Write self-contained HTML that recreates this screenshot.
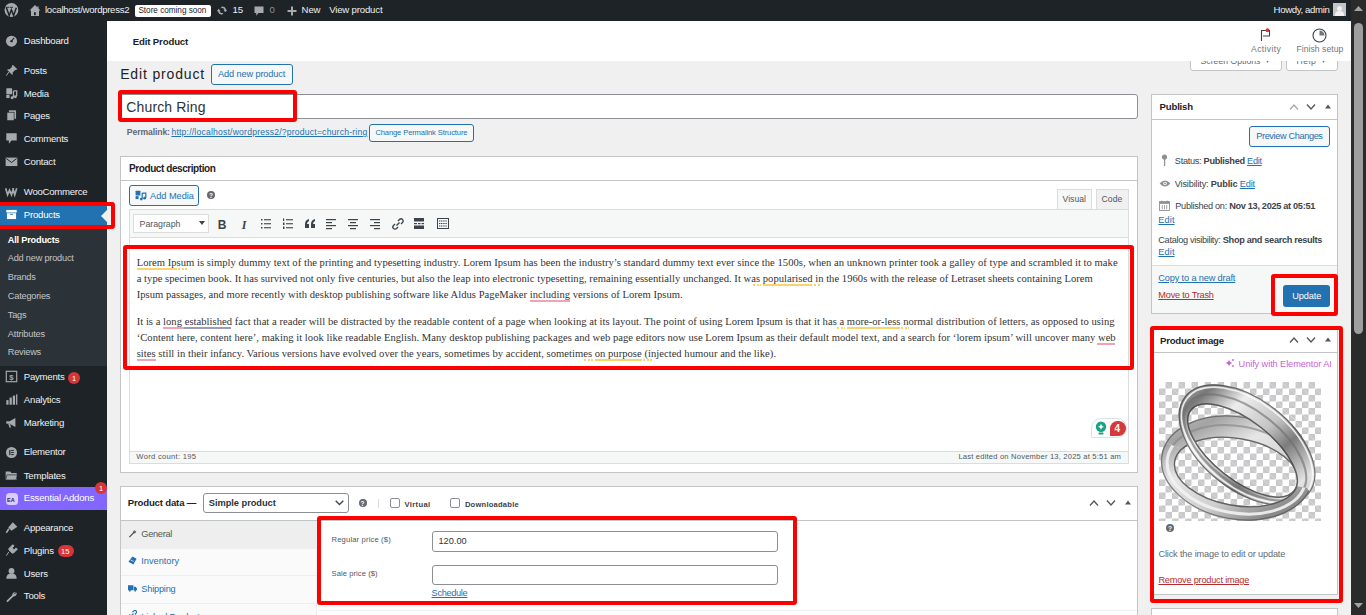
<!DOCTYPE html>
<html><head><meta charset="utf-8"><style>*{box-sizing:border-box;margin:0;padding:0}
html,body{width:1366px;height:615px;overflow:hidden;background:#f0f0f1;font-family:"Liberation Sans",sans-serif;color:#3c434a;position:relative}
.a{position:absolute}
.tx{position:absolute;white-space:nowrap;line-height:1}
.btn{position:absolute;border:1px solid #2271b1;background:#f6f7f7;border-radius:3px}
.red{position:absolute;border:4px solid #f00;border-radius:3px}
b{font-weight:700}
u{text-decoration:underline}
</style></head><body>
<div class="a" style="left:0;top:0;width:1351px;height:21px;background:#1d2327"></div>
<svg class="a" style="left:4px;top:3px" width="15" height="15" viewBox="0 0 15 15"><circle cx="7.4" cy="7" r="6.9" fill="#a7aaad"/><path d="M2.3 4.6 L5.2 12.6 L7.4 6.8 L9.6 12.6 L12.3 4.8" fill="none" stroke="#1d2327" stroke-width="1.5"/><path d="M1.6 4.3 H5.4 M6 4.3 H9" stroke="#1d2327" stroke-width="0.9"/></svg>
<svg class="a" style="left:29px;top:4px" width="12" height="13" viewBox="0 0 12 13"><path d="M6 1 L0.5 6.5 H2 V12 H10 V6.5 H11.5 L9.5 4.5 V2.2 H8.5 V3.5 Z" fill="#a7aaad"/><rect x="5" y="8.2" width="1.8" height="3" fill="#1d2327"/></svg>
<div class="tx" id="t0" style="left:45.00px;top:5.00px;font-size:9.6px;font-weight:400;color:#f0f0f1;font-family:'Liberation Sans',sans-serif;letter-spacing:-0.296px;">localhost/wordpress2</div>
<div class="a" style="left:135px;top:5px;width:76px;height:12px;background:#fff;border-radius:2px"></div>
<div class="tx" id="t1" style="left:138.40px;top:7.00px;font-size:8.2px;font-weight:400;color:#1d2327;font-family:'Liberation Sans',sans-serif;letter-spacing:-0.017px;">Store coming soon</div>
<svg class="a" style="left:216px;top:5px" width="12" height="11" viewBox="0 0 20 20"><path d="M10 2.5 A7.5 7.5 0 0 1 17.3 8.5 L19.5 8.5 L16 13 L12.5 8.5 L14.5 8.5 A4.8 4.8 0 0 0 6 7.5 Z M10 17.5 A7.5 7.5 0 0 1 2.7 11.5 L0.5 11.5 L4 7 L7.5 11.5 L5.5 11.5 A4.8 4.8 0 0 0 14 12.5 Z" fill="#a7aaad"/></svg>
<div class="tx" id="t2" style="left:232.60px;top:5.00px;font-size:9.6px;font-weight:400;color:#f0f0f1;font-family:'Liberation Sans',sans-serif;letter-spacing:-0.186px;">15</div>
<svg class="a" style="left:254px;top:6px" width="10" height="10" viewBox="0 0 20 20"><path d="M1 1 H19 V14 H9 L4.5 19.5 V14 H1 Z" fill="#a7aaad"/></svg>
<div class="tx" id="t3" style="left:269.60px;top:5.00px;font-size:9.6px;font-weight:400;color:#8c8f94;font-family:'Liberation Sans',sans-serif;letter-spacing:0.000px;">0</div>
<svg class="a" style="left:287px;top:6px" width="10" height="10" viewBox="0 0 20 20"><path d="M8 1 H12 V8 H19 V12 H12 V19 H8 V12 H1 V8 H8 Z" fill="#a7aaad"/></svg>
<div class="tx" id="t4" style="left:301.60px;top:5.00px;font-size:9.6px;font-weight:400;color:#f0f0f1;font-family:'Liberation Sans',sans-serif;letter-spacing:-0.134px;">New</div>
<div class="tx" id="t5" style="left:329.20px;top:5.00px;font-size:9.6px;font-weight:400;color:#f0f0f1;font-family:'Liberation Sans',sans-serif;letter-spacing:-0.175px;">View product</div>
<div class="tx" id="t6" style="left:1273.60px;top:5.00px;font-size:9.6px;font-weight:400;color:#f0f0f1;font-family:'Liberation Sans',sans-serif;letter-spacing:-0.357px;">Howdy, admin</div>
<div class="a" style="left:1333px;top:3px;width:13px;height:13px;background:#c3c4c7;overflow:hidden"><div class="a" style="left:4px;top:3px;width:5px;height:5px;border-radius:50%;background:#f0f0f1"></div><div class="a" style="left:2px;top:8px;width:9px;height:7px;border-radius:50% 50% 0 0;background:#f0f0f1"></div></div>
<div class="a" style="left:1351px;top:0;width:15px;height:615px;background:#2b2b2b"></div>
<div class="a" style="left:1354px;top:23px;width:9px;height:311px;background:#9e9e9e;border-radius:4.5px"></div>
<svg class="a" style="left:1354px;top:5px" width="9" height="7"><path d="M0 6 L4.5 1 L9 6 Z" fill="#a3a3a3"/></svg>
<svg class="a" style="left:1354px;top:602px" width="9" height="7"><path d="M0 1 L4.5 6 L9 1 Z" fill="#a3a3a3"/></svg>
<div class="a" style="left:0;top:21px;width:107px;height:594px;background:#1d2327"></div>
<div class="a" style="left:0;top:206px;width:107px;height:19px;background:#2271b1"></div>
<svg class="a" style="left:100px;top:210px" width="7" height="12"><path d="M7 0 L1 6 L7 12 Z" fill="#f0f0f1"/></svg>
<div class="a" style="left:0;top:225px;width:107px;height:141px;background:#2c3338"></div>
<div class="a" style="left:0;top:487px;width:107px;height:23px;background:#8266ff"></div>
<div class="tx" id="t7" style="left:23.80px;top:36.00px;font-size:9.6px;font-weight:400;color:#f0f0f1;font-family:'Liberation Sans',sans-serif;letter-spacing:-0.235px;">Dashboard</div>
<div class="tx" id="t8" style="left:23.80px;top:66.00px;font-size:9.6px;font-weight:400;color:#f0f0f1;font-family:'Liberation Sans',sans-serif;letter-spacing:-0.216px;">Posts</div>
<div class="tx" id="t9" style="left:23.80px;top:89.00px;font-size:9.6px;font-weight:400;color:#f0f0f1;font-family:'Liberation Sans',sans-serif;letter-spacing:-0.235px;">Media</div>
<div class="tx" id="t10" style="left:23.80px;top:111.00px;font-size:9.6px;font-weight:400;color:#f0f0f1;font-family:'Liberation Sans',sans-serif;letter-spacing:-0.245px;">Pages</div>
<div class="tx" id="t11" style="left:23.80px;top:134.00px;font-size:9.6px;font-weight:400;color:#f0f0f1;font-family:'Liberation Sans',sans-serif;letter-spacing:-0.261px;">Comments</div>
<div class="tx" id="t12" style="left:23.80px;top:157.00px;font-size:9.6px;font-weight:400;color:#f0f0f1;font-family:'Liberation Sans',sans-serif;letter-spacing:-0.213px;">Contact</div>
<div class="tx" id="t13" style="left:23.80px;top:187.00px;font-size:9.6px;font-weight:400;color:#f0f0f1;font-family:'Liberation Sans',sans-serif;letter-spacing:-0.272px;">WooCommerce</div>
<div class="tx" id="t14" style="left:23.80px;top:210.00px;font-size:9.6px;font-weight:400;color:#fff;font-family:'Liberation Sans',sans-serif;letter-spacing:-0.213px;">Products</div>
<div class="tx" id="t15" style="left:23.80px;top:372.00px;font-size:9.6px;font-weight:400;color:#f0f0f1;font-family:'Liberation Sans',sans-serif;letter-spacing:-0.240px;">Payments</div>
<div class="tx" id="t16" style="left:23.80px;top:395.00px;font-size:9.6px;font-weight:400;color:#f0f0f1;font-family:'Liberation Sans',sans-serif;letter-spacing:-0.192px;">Analytics</div>
<div class="tx" id="t17" style="left:23.80px;top:418.00px;font-size:9.6px;font-weight:400;color:#f0f0f1;font-family:'Liberation Sans',sans-serif;letter-spacing:-0.211px;">Marketing</div>
<div class="tx" id="t18" style="left:23.80px;top:447.00px;font-size:9.6px;font-weight:400;color:#f0f0f1;font-family:'Liberation Sans',sans-serif;letter-spacing:-0.219px;">Elementor</div>
<div class="tx" id="t19" style="left:23.80px;top:471.00px;font-size:9.6px;font-weight:400;color:#f0f0f1;font-family:'Liberation Sans',sans-serif;letter-spacing:-0.219px;">Templates</div>
<div class="tx" id="t20" style="left:23.80px;top:493.00px;font-size:9.6px;font-weight:400;color:#fff;font-family:'Liberation Sans',sans-serif;letter-spacing:-0.207px;">Essential Addons</div>
<div class="tx" id="t21" style="left:23.80px;top:523.00px;font-size:9.6px;font-weight:400;color:#f0f0f1;font-family:'Liberation Sans',sans-serif;letter-spacing:-0.233px;">Appearance</div>
<div class="tx" id="t22" style="left:23.80px;top:546.00px;font-size:9.6px;font-weight:400;color:#f0f0f1;font-family:'Liberation Sans',sans-serif;letter-spacing:-0.202px;">Plugins</div>
<div class="tx" id="t23" style="left:23.80px;top:569.00px;font-size:9.6px;font-weight:400;color:#f0f0f1;font-family:'Liberation Sans',sans-serif;letter-spacing:-0.226px;">Users</div>
<div class="tx" id="t24" style="left:23.80px;top:591.00px;font-size:9.6px;font-weight:400;color:#f0f0f1;font-family:'Liberation Sans',sans-serif;letter-spacing:-0.202px;">Tools</div>
<div class="tx" id="t25" style="left:7.80px;top:236.00px;font-size:9.2px;font-weight:700;color:#fff;font-family:'Liberation Sans',sans-serif;letter-spacing:-0.203px;">All Products</div>
<div class="tx" id="t26" style="left:7.80px;top:254.00px;font-size:9.2px;font-weight:400;color:#c3c4c7;font-family:'Liberation Sans',sans-serif;letter-spacing:-0.207px;">Add new product</div>
<div class="tx" id="t27" style="left:7.80px;top:273.00px;font-size:9.2px;font-weight:400;color:#c3c4c7;font-family:'Liberation Sans',sans-serif;letter-spacing:-0.218px;">Brands</div>
<div class="tx" id="t28" style="left:7.80px;top:292.00px;font-size:9.2px;font-weight:400;color:#c3c4c7;font-family:'Liberation Sans',sans-serif;letter-spacing:-0.200px;">Categories</div>
<div class="tx" id="t29" style="left:7.80px;top:311.00px;font-size:9.2px;font-weight:400;color:#c3c4c7;font-family:'Liberation Sans',sans-serif;letter-spacing:-0.218px;">Tags</div>
<div class="tx" id="t30" style="left:7.80px;top:330.00px;font-size:9.2px;font-weight:400;color:#c3c4c7;font-family:'Liberation Sans',sans-serif;letter-spacing:-0.175px;">Attributes</div>
<div class="tx" id="t31" style="left:7.80px;top:348.00px;font-size:9.2px;font-weight:400;color:#c3c4c7;font-family:'Liberation Sans',sans-serif;letter-spacing:-0.223px;">Reviews</div>
<div class="a" style="left:68px;top:372px;width:12px;height:12px;border-radius:6px;background:#d63638"></div>
<div class="tx" id="t32" style="left:72.10px;top:375.00px;font-size:7.5px;font-weight:400;color:#fff;font-family:'Liberation Sans',sans-serif;letter-spacing:0.000px;">1</div>
<div class="a" style="left:95px;top:482px;width:12px;height:12px;border-radius:6px;background:#d63638"></div>
<div class="tx" id="t33" style="left:99.10px;top:485.00px;font-size:7.5px;font-weight:400;color:#fff;font-family:'Liberation Sans',sans-serif;letter-spacing:0.000px;">1</div>
<div class="a" style="left:58px;top:545px;width:16px;height:12px;border-radius:6px;background:#d63638"></div>
<div class="tx" id="t34" style="left:61.10px;top:548.00px;font-size:7.5px;font-weight:400;color:#fff;font-family:'Liberation Sans',sans-serif;letter-spacing:0.000px;">15</div>
<svg class="a" style="left:5px;top:33.5px" width="13" height="13" viewBox="0 0 20 20"><circle cx="10" cy="11" r="8.5" fill="#a7aaad"/><path d="M10 11 L14 6" stroke="#1d2327" stroke-width="1.6"/><circle cx="10" cy="11" r="1.8" fill="#1d2327"/></svg>
<svg class="a" style="left:5px;top:63.5px" width="13" height="13" viewBox="0 0 20 20"><path d="M12 2 L18 8 L15 9 L11 13 L11 16 L4 9 L7 9 L11 5 Z M6 12 L2 18" fill="#a7aaad" stroke="#a7aaad" stroke-width="1.5"/></svg>
<svg class="a" style="left:5px;top:86.5px" width="13" height="13" viewBox="0 0 20 20"><rect x="2" y="2" width="9" height="9" rx="1" fill="#a7aaad"/><path d="M13 6 V16 M13 6 H18 V14" stroke="#a7aaad" stroke-width="2" fill="none"/><circle cx="11" cy="16.5" r="2.3" fill="#a7aaad"/><circle cx="16" cy="15" r="2.3" fill="#a7aaad"/><rect x="2" y="12" width="5" height="5" fill="#a7aaad"/></svg>
<svg class="a" style="left:5px;top:108.5px" width="13" height="13" viewBox="0 0 20 20"><rect x="6" y="2" width="11" height="13" fill="#a7aaad"/><rect x="3" y="5" width="11" height="13" fill="#a7aaad" stroke="#1d2327" stroke-width="1"/></svg>
<svg class="a" style="left:5px;top:131.5px" width="13" height="13" viewBox="0 0 20 20"><path d="M2 2 H18 V13 H10 L6 18 V13 H2 Z" fill="#a7aaad"/></svg>
<svg class="a" style="left:5px;top:154.5px" width="13" height="13" viewBox="0 0 20 20"><rect x="1" y="4" width="18" height="13" fill="#a7aaad"/><path d="M2 5.5 L10 11.5 L18 5.5" stroke="#1d2327" stroke-width="1.5" fill="none"/></svg>
<svg class="a" style="left:5px;top:184.5px" width="13" height="13" viewBox="0 0 20 20"><path d="M1 5 L4 15 L7 8 L10 15 L13 5 M12 5 L15 15 L18 5" stroke="#a7aaad" stroke-width="2.6" fill="none"/></svg>
<svg class="a" style="left:5px;top:207.5px" width="13" height="13" viewBox="0 0 20 20"><rect x="2" y="3" width="16" height="4" fill="#fff"/><rect x="3" y="8" width="14" height="9" fill="#fff"/><rect x="8" y="9" width="4" height="1.5" fill="#2271b1"/></svg>
<svg class="a" style="left:5px;top:369.5px" width="13" height="13" viewBox="0 0 20 20"><rect x="2" y="2" width="16" height="16" fill="none" stroke="#a7aaad" stroke-width="1.8"/><text x="10" y="15" font-size="12" font-family="Liberation Sans" text-anchor="middle" fill="#a7aaad" font-weight="bold">$</text></svg>
<svg class="a" style="left:5px;top:392.5px" width="13" height="13" viewBox="0 0 20 20"><rect x="2" y="11" width="3.5" height="7" fill="#a7aaad"/><rect x="7" y="7" width="3.5" height="11" fill="#a7aaad"/><rect x="12" y="4" width="3.5" height="14" fill="#a7aaad"/><rect x="17" y="2" width="2" height="16" fill="#a7aaad"/></svg>
<svg class="a" style="left:5px;top:415.5px" width="13" height="13" viewBox="0 0 20 20"><path d="M2 8 H7 L16 3 V17 L7 12 H2 Z" fill="#a7aaad"/><path d="M5 12 L7 18 H9 L8 12" fill="#a7aaad"/></svg>
<svg class="a" style="left:5px;top:445.5px" width="13" height="13" viewBox="0 0 20 20"><circle cx="10" cy="10" r="8.5" fill="#a7aaad"/><rect x="6.5" y="6" width="1.8" height="8" fill="#1d2327"/><rect x="9.5" y="6" width="4" height="1.5" fill="#1d2327"/><rect x="9.5" y="9.2" width="4" height="1.5" fill="#1d2327"/><rect x="9.5" y="12.5" width="4" height="1.5" fill="#1d2327"/></svg>
<svg class="a" style="left:5px;top:468.5px" width="13" height="13" viewBox="0 0 20 20"><path d="M1 4 H8 L10 6 H18 V17 H1 Z" fill="#a7aaad"/><path d="M3 9 H19 L17 17 H1 Z" fill="#a7aaad" stroke="#1d2327" stroke-width="1"/></svg>
<svg class="a" style="left:5px;top:520.5px" width="13" height="13" viewBox="0 0 20 20"><path d="M12 2 L19 9 L10 15 L5 10 Z" fill="#a7aaad"/><path d="M6 12 L2 18" stroke="#a7aaad" stroke-width="2.5"/></svg>
<svg class="a" style="left:5px;top:543.5px" width="13" height="13" viewBox="0 0 20 20"><path d="M12 1 L14 3 L11 6 L14 9 L17 6 L19 8 L13 14 L11 14 L6 9 L6 7 Z M6 12 L2 18" fill="#a7aaad" stroke="#a7aaad" stroke-width="1.5"/></svg>
<svg class="a" style="left:5px;top:566.5px" width="13" height="13" viewBox="0 0 20 20"><circle cx="10" cy="6" r="4.5" fill="#a7aaad"/><path d="M2 18 Q2 10 10 10 Q18 10 18 18 Z" fill="#a7aaad"/></svg>
<svg class="a" style="left:5px;top:589.5px" width="13" height="13" viewBox="0 0 20 20"><path d="M17 3 A5 5 0 0 0 11 8 L2 17 L4 19 L13 10 A5 5 0 0 0 18 4 L15 6 L14 5 Z" fill="#a7aaad"/></svg>
<div class="a" style="left:6px;top:493px;width:12px;height:12px;border-radius:3.5px;background:#dccbff"></div>
<div class="tx" id="t35" style="left:7.10px;top:498.00px;font-size:5.5px;font-weight:700;color:#2c2150;font-family:'Liberation Sans',sans-serif;letter-spacing:0.000px;">EA</div>
<div class="red" style="left:-4px;top:202px;width:119px;height:27px"></div>
<div class="a" style="left:1190px;top:50px;width:92px;height:21px;background:#fff;border:1px solid #c3c4c7;border-radius:0 0 3px 3px"></div>
<div class="a" style="left:1286px;top:50px;width:52px;height:21px;background:#fff;border:1px solid #c3c4c7;border-radius:0 0 3px 3px"></div>
<div class="tx" id="t36" style="left:1200.60px;top:57.00px;font-size:8.6px;font-weight:400;color:#646970;font-family:'Liberation Sans',sans-serif;letter-spacing:0.040px;">Screen Options</div>
<div class="tx" id="t37" style="left:1265.60px;top:58.00px;font-size:6px;font-weight:400;color:#646970;font-family:'Liberation Sans',sans-serif;letter-spacing:0.000px;">▾</div>
<div class="tx" id="t38" style="left:1296.60px;top:57.00px;font-size:8.6px;font-weight:400;color:#646970;font-family:'Liberation Sans',sans-serif;letter-spacing:0.528px;">Help</div>
<div class="tx" id="t39" style="left:1321.60px;top:58.00px;font-size:6px;font-weight:400;color:#646970;font-family:'Liberation Sans',sans-serif;letter-spacing:0.000px;">▾</div>
<div class="a" style="left:107px;top:21px;width:1244px;height:40px;background:#fff"></div>
<div class="tx" id="t40" style="left:132.80px;top:37.00px;font-size:9.6px;font-weight:700;color:#1d2327;font-family:'Liberation Sans',sans-serif;letter-spacing:-0.144px;">Edit Product</div>
<svg class="a" style="left:1260px;top:28px" width="12" height="14" viewBox="0 0 12 14"><path d="M1.5 13 V2.5 H9.5 V8 H3" fill="none" stroke="#3c434a" stroke-width="1.1"/><circle cx="7.5" cy="2.3" r="2" fill="#d63638"/></svg>
<div class="tx" id="t41" style="left:1251.10px;top:45.00px;font-size:8.6px;font-weight:400;color:#757575;font-family:'Liberation Sans',sans-serif;letter-spacing:0.360px;">Activity</div>
<svg class="a" style="left:1312px;top:28px" width="15" height="15" viewBox="0 0 15 15"><circle cx="7.5" cy="7.5" r="6.5" fill="none" stroke="#3c434a" stroke-width="1.1"/><path d="M7.5 2.5 A5 5 0 0 1 12.5 7.5 H7.5 Z" fill="#757575"/></svg>
<div class="tx" id="t42" style="left:1296.40px;top:45.00px;font-size:8.6px;font-weight:400;color:#757575;font-family:'Liberation Sans',sans-serif;letter-spacing:0.055px;">Finish setup</div>
<div class="tx" id="t43" style="left:120.20px;top:67.00px;font-size:14px;font-weight:400;color:#1d2327;font-family:'Liberation Sans',sans-serif;letter-spacing:0.840px;">Edit product</div>
<div class="btn" style="left:211px;top:64px;width:82px;height:21px"></div>
<div class="tx" id="t44" style="left:218.10px;top:70.00px;font-size:9.2px;font-weight:400;color:#2271b1;font-family:'Liberation Sans',sans-serif;letter-spacing:-0.124px;">Add new product</div>
<div class="a" style="left:120px;top:94px;width:1018px;height:25px;background:#fff;border:1px solid #8c8f94;border-radius:3px"></div>
<div class="tx" id="t45" style="left:126.30px;top:100.00px;font-size:14px;font-weight:400;color:#2c3338;font-family:'Liberation Sans',sans-serif;letter-spacing:0.143px;">Church Ring</div>
<div class="red" style="left:118px;top:90px;width:179px;height:32px"></div>
<div class="tx" id="t46" style="left:126.80px;top:128.00px;font-size:8.6px;font-weight:700;color:#646970;font-family:'Liberation Sans',sans-serif;letter-spacing:-0.085px;">Permalink:</div>
<div class="tx" id="t47" style="left:171.40px;top:128.00px;font-size:8.6px;font-weight:400;color:#2271b1;font-family:'Liberation Sans',sans-serif;letter-spacing:0.207px;text-decoration:underline">http://localhost/wordpress2/?product=church-ring</div>
<div class="btn" style="left:369px;top:124px;width:105px;height:18px"></div>
<div class="tx" id="t48" style="left:375.40px;top:129.00px;font-size:7.6px;font-weight:400;color:#2271b1;font-family:'Liberation Sans',sans-serif;letter-spacing:-0.130px;">Change Permalink Structure</div>
<div class="a" style="left:120px;top:156px;width:1018px;height:317px;background:#fff;border:1px solid #c3c4c7"></div>
<div class="a" style="left:121px;top:180px;width:1016px;height:1px;background:#c3c4c7"></div>
<div class="tx" id="t49" style="left:129.10px;top:164.00px;font-size:10px;font-weight:700;color:#1d2327;font-family:'Liberation Sans',sans-serif;letter-spacing:-0.429px;">Product description</div>
<div class="btn" style="left:129px;top:185px;width:70px;height:21px"></div>
<svg class="a" style="left:135px;top:190px" width="12" height="11" viewBox="0 0 20 18"><rect x="1" y="1" width="8" height="8" rx="1" fill="#2271b1"/><rect x="1" y="10" width="5" height="5" fill="#2271b1"/><path d="M12 5 V14 M12 5 H18 V13" stroke="#2271b1" stroke-width="2" fill="none"/><circle cx="10.5" cy="15" r="2.3" fill="#2271b1"/><circle cx="16" cy="13.5" r="2.3" fill="#2271b1"/></svg>
<div class="tx" id="t50" style="left:150.10px;top:192.00px;font-size:9.2px;font-weight:400;color:#2271b1;font-family:'Liberation Sans',sans-serif;letter-spacing:-0.015px;">Add Media</div>
<div class="a" style="left:207px;top:191px;width:8px;height:8px;border-radius:50%;background:#646970"></div>
<div class="tx" id="t51" style="left:208.90px;top:193.00px;font-size:6.5px;font-weight:700;color:#fff;font-family:'Liberation Sans',sans-serif;letter-spacing:0.000px;">?</div>
<div class="a" style="left:1057px;top:189px;width:35px;height:21px;background:#f6f7f7;border:1px solid #dcdcde;border-bottom:none"></div>
<div class="a" style="left:1096px;top:189px;width:33px;height:21px;background:#f0f0f1;border:1px solid #dcdcde;border-bottom:none"></div>
<div class="tx" id="t52" style="left:1062.60px;top:195.00px;font-size:8.6px;font-weight:400;color:#50575e;font-family:'Liberation Sans',sans-serif;letter-spacing:0.006px;">Visual</div>
<div class="tx" id="t53" style="left:1101.60px;top:195.00px;font-size:8.6px;font-weight:400;color:#50575e;font-family:'Liberation Sans',sans-serif;letter-spacing:0.063px;">Code</div>
<div class="a" style="left:129px;top:209px;width:1000px;height:255px;border:1px solid #dcdcde;background:#fff"></div>
<div class="a" style="left:130px;top:210px;width:998px;height:28px;background:#f6f7f7;border-bottom:1px solid #dcdcde"></div>
<div class="a" style="left:133px;top:214px;width:76px;height:19px;background:#fff;border:1px solid #dcdcde"></div>
<div class="tx" id="t54" style="left:139.60px;top:220.00px;font-size:8.8px;font-weight:400;color:#50575e;font-family:'Liberation Sans',sans-serif;letter-spacing:-0.033px;">Paragraph</div>
<svg class="a" style="left:199px;top:221px" width="6" height="4"><path d="M0 0 H6 L3 4 Z" fill="#3c434a"/></svg>
<svg class="a" style="left:217px;top:218px" width="12" height="12"><text x="5" y="10.5" font-size="12" font-weight="bold" font-family="Liberation Sans" text-anchor="middle" fill="#3c434a">B</text></svg>
<svg class="a" style="left:238.5px;top:218px" width="12" height="12"><text x="5" y="10.5" font-size="12" font-style="italic" font-weight="bold" font-family="Liberation Serif" text-anchor="middle" fill="#3c434a">I</text></svg>
<svg class="a" style="left:261px;top:218px" width="12" height="12"><rect x="0" y="1" width="1.5" height="1.5" fill="#3c434a"/><rect x="3" y="1.2" width="7" height="1.1" fill="#3c434a"/><rect x="0" y="5" width="1.5" height="1.5" fill="#3c434a"/><rect x="3" y="5.2" width="7" height="1.1" fill="#3c434a"/><rect x="0" y="9" width="1.5" height="1.5" fill="#3c434a"/><rect x="3" y="9.2" width="7" height="1.1" fill="#3c434a"/></svg>
<svg class="a" style="left:283px;top:218px" width="12" height="12"><rect x="0" y="0.5" width="1.2" height="2.5" fill="#3c434a"/><rect x="3" y="1.2" width="7" height="1.1" fill="#3c434a"/><rect x="0" y="4.5" width="1.5" height="2.5" fill="#3c434a"/><rect x="3" y="5.2" width="7" height="1.1" fill="#3c434a"/><rect x="0" y="8.5" width="1.5" height="2.5" fill="#3c434a"/><rect x="3" y="9.2" width="7" height="1.1" fill="#3c434a"/></svg>
<svg class="a" style="left:305px;top:218px" width="12" height="12"><path d="M0 10 V6 Q0 2 4 1 V3 Q2 4 2 6 H4 V10 Z M6 10 V6 Q6 2 10 1 V3 Q8 4 8 6 H10 V10 Z" fill="#3c434a"/></svg>
<svg class="a" style="left:326px;top:218px" width="12" height="12"><rect x="0" y="1" width="10" height="1.2" fill="#3c434a"/><rect x="0" y="4" width="6" height="1.2" fill="#3c434a"/><rect x="0" y="7" width="10" height="1.2" fill="#3c434a"/><rect x="0" y="10" width="6" height="1.2" fill="#3c434a"/></svg>
<svg class="a" style="left:348px;top:218px" width="12" height="12"><rect x="0" y="1" width="10" height="1.2" fill="#3c434a"/><rect x="2" y="4" width="6" height="1.2" fill="#3c434a"/><rect x="0" y="7" width="10" height="1.2" fill="#3c434a"/><rect x="2" y="10" width="6" height="1.2" fill="#3c434a"/></svg>
<svg class="a" style="left:370px;top:218px" width="12" height="12"><rect x="0" y="1" width="10" height="1.2" fill="#3c434a"/><rect x="4" y="4" width="6" height="1.2" fill="#3c434a"/><rect x="0" y="7" width="10" height="1.2" fill="#3c434a"/><rect x="4" y="10" width="6" height="1.2" fill="#3c434a"/></svg>
<svg class="a" style="left:392px;top:218px" width="12" height="12"><path d="M4.5 7.5 L7.5 4.5 M3 6 L1.5 7.5 A2 2 0 0 0 4.5 10.5 L6 9 M6 3 L7.5 1.5 A2 2 0 0 1 10.5 4.5 L9 6" stroke="#3c434a" stroke-width="1.4" fill="none"/></svg>
<svg class="a" style="left:414px;top:218px" width="12" height="12"><rect x="0" y="0" width="10" height="3.5" fill="#3c434a"/><rect x="0" y="5" width="3" height="1.2" fill="#3c434a"/><rect x="4" y="5" width="2.5" height="1.2" fill="#3c434a"/><rect x="7.5" y="5" width="2.5" height="1.2" fill="#3c434a"/><rect x="0" y="7.5" width="10" height="3.5" fill="#3c434a"/></svg>
<svg class="a" style="left:436.5px;top:218px" width="12" height="12"><rect x="0.5" y="0.5" width="11" height="10" fill="none" stroke="#3c434a" stroke-width="1"/><path d="M2 3 H10 M2 5.5 H10 M2 8 H10" stroke="#3c434a" stroke-width="1.2" stroke-dasharray="1.2 0.6"/></svg>
<div class="tx" id="t55" style="left:136.70px;top:258.00px;font-size:10.6px;font-weight:400;color:#333;font-family:'Liberation Serif',serif;letter-spacing:0.027px;">Lorem Ipsum is simply dummy text of the printing and typesetting industry. Lorem Ipsum has been the industry’s standard dummy text ever since the 1500s, when an unknown printer took a galley of type and scrambled it to make</div>
<div class="tx" id="t56" style="left:136.70px;top:274.00px;font-size:10.6px;font-weight:400;color:#333;font-family:'Liberation Serif',serif;letter-spacing:0.026px;">a type specimen book. It has survived not only five centuries, but also the leap into electronic typesetting, remaining essentially unchanged. It was popularised in the 1960s with the release of Letraset sheets containing Lorem</div>
<div class="tx" id="t57" style="left:136.70px;top:290.00px;font-size:10.6px;font-weight:400;color:#333;font-family:'Liberation Serif',serif;letter-spacing:0.024px;">Ipsum passages, and more recently with desktop publishing software like Aldus PageMaker including versions of Lorem Ipsum.</div>
<div class="tx" id="t58" style="left:136.70px;top:317.00px;font-size:10.6px;font-weight:400;color:#333;font-family:'Liberation Serif',serif;letter-spacing:0.025px;">It is a long established fact that a reader will be distracted by the readable content of a page when looking at its layout. The point of using Lorem Ipsum is that it has a more-or-less normal distribution of letters, as opposed to using</div>
<div class="tx" id="t59" style="left:136.70px;top:333.00px;font-size:10.6px;font-weight:400;color:#333;font-family:'Liberation Serif',serif;letter-spacing:0.027px;">‘Content here, content here’, making it look like readable English. Many desktop publishing packages and web page editors now use Lorem Ipsum as their default model text, and a search for ‘lorem ipsum’ will uncover many web</div>
<div class="tx" id="t60" style="left:136.70px;top:349.00px;font-size:10.6px;font-weight:400;color:#333;font-family:'Liberation Serif',serif;letter-spacing:0.024px;">sites still in their infancy. Various versions have evolved over the years, sometimes by accident, sometimes on purpose (injected humour and the like).</div>
<div class="a" style="left:137px;top:267.9px;width:40.0px;height:2px;background:#fbd36b"></div>
<div class="a" style="left:178px;top:267.9px;width:9.0px;height:2px;background:repeating-linear-gradient(90deg,#fbd36b 0 2px,transparent 2px 3.6px)"></div>
<div class="a" style="left:753px;top:284.1px;width:8.0px;height:2px;background:repeating-linear-gradient(90deg,#fbd36b 0 2px,transparent 2px 3.6px)"></div>
<div class="a" style="left:763px;top:284.1px;width:49.0px;height:2px;background:#fbd36b"></div>
<div class="a" style="left:813.6px;top:284.1px;width:7.8px;height:2px;background:repeating-linear-gradient(90deg,#fbd36b 0 2px,transparent 2px 3.6px)"></div>
<div class="a" style="left:530px;top:300.1px;width:40.0px;height:2px;background:#f0a3b4"></div>
<div class="a" style="left:163.4px;top:327.4px;width:20.9px;height:2px;background:#f0a3b4"></div>
<div class="a" style="left:184.3px;top:327.4px;width:47.0px;height:2px;background:#9b9bc0"></div>
<div class="a" style="left:837px;top:327.4px;width:8.0px;height:2px;background:repeating-linear-gradient(90deg,#fbd36b 0 2px,transparent 2px 3.6px)"></div>
<div class="a" style="left:847px;top:327.4px;width:52.5px;height:2px;background:#fbd36b"></div>
<div class="a" style="left:901.4px;top:327.4px;width:7.8px;height:2px;background:repeating-linear-gradient(90deg,#fbd36b 0 2px,transparent 2px 3.6px)"></div>
<div class="a" style="left:1097.3px;top:343.2px;width:17.5px;height:2px;background:#f0a3b4"></div>
<div class="a" style="left:137px;top:359.4px;width:18.5px;height:2px;background:#f0a3b4"></div>
<div class="a" style="left:584px;top:359.4px;width:9.0px;height:2px;background:repeating-linear-gradient(90deg,#fbd36b 0 2px,transparent 2px 3.6px)"></div>
<div class="a" style="left:595.4px;top:359.4px;width:46.2px;height:2px;background:#fbd36b"></div>
<div class="a" style="left:642.5px;top:359.4px;width:9.2px;height:2px;background:repeating-linear-gradient(90deg,#fbd36b 0 2px,transparent 2px 3.6px)"></div>
<div class="a" style="left:1091px;top:418px;width:36px;height:20px;background:#fff;border:1px solid #dde0ea;border-radius:10px 10px 10px 0"></div>
<svg class="a" style="left:1095px;top:421px" width="12" height="14" viewBox="0 0 12 14"><circle cx="6" cy="5.8" r="5.2" fill="#1aa383"/><path d="M6 2.8 Q6.4 5.4 9 5.8 Q6.4 6.2 6 8.8 Q5.6 6.2 3 5.8 Q5.6 5.4 6 2.8 Z" fill="#fff"/><rect x="3.5" y="11.6" width="5" height="1.8" rx="0.6" fill="#1aa383"/></svg>
<div class="a" style="left:1110px;top:421px;width:16px;height:15px;border-radius:8px 8px 8px 0;background:#d6393a"></div>
<div class="tx" id="t61" style="left:1114.40px;top:424.00px;font-size:10px;font-weight:700;color:#fff;font-family:'Liberation Sans',sans-serif;letter-spacing:0.000px;">4</div>
<div class="a" style="left:130px;top:451px;width:998px;height:12px;background:#f6f7f7;border-top:1px solid #dcdcde"></div>
<div class="tx" id="t62" style="left:136.30px;top:453.00px;font-size:7.6px;font-weight:400;color:#50575e;font-family:'Liberation Sans',sans-serif;letter-spacing:0.300px;">Word count: 195</div>
<div class="tx" id="t63" style="left:958.40px;top:453.00px;font-size:7.6px;font-weight:400;color:#50575e;font-family:'Liberation Sans',sans-serif;letter-spacing:0.190px;">Last edited on November 13, 2025 at 5:51 am</div>
<div class="red" style="left:123px;top:245px;width:1011px;height:125px"></div>
<div class="a" style="left:120px;top:486px;width:1018px;height:140px;background:#fff;border:1px solid #c3c4c7"></div>
<div class="a" style="left:121px;top:520px;width:1016px;height:1px;background:#c3c4c7"></div>
<div class="tx" id="t64" style="left:127.80px;top:498.00px;font-size:9.6px;font-weight:700;color:#1d2327;font-family:'Liberation Sans',sans-serif;letter-spacing:-0.179px;">Product data —</div>
<div class="a" style="left:203px;top:493px;width:146px;height:20px;background:#fff;border:1px solid #8c8f94;border-radius:3px"></div>
<div class="tx" id="t65" style="left:208.80px;top:499.00px;font-size:9.3px;font-weight:700;color:#2c3338;font-family:'Liberation Sans',sans-serif;letter-spacing:-0.048px;">Simple product</div>
<svg class="a" style="left:335px;top:500px" width="9" height="6"><path d="M0.7 0.7 L4.5 4.5 L8.3 0.7" stroke="#3c434a" stroke-width="1.3" fill="none"/></svg>
<div class="a" style="left:358.5px;top:499px;width:8px;height:8px;border-radius:50%;background:#646970"></div>
<div class="tx" id="t66" style="left:360.40px;top:501.00px;font-size:6.5px;font-weight:700;color:#fff;font-family:'Liberation Sans',sans-serif;letter-spacing:0.000px;">?</div>
<div class="a" style="left:378px;top:499px;width:1px;height:9px;background:#dcdcde"></div>
<div class="a" style="left:390px;top:498px;width:10px;height:10px;border:1px solid #8c8f94;border-radius:2px;background:#fff"></div>
<div class="tx" id="t67" style="left:404.40px;top:501.00px;font-size:7.6px;font-weight:700;color:#3c434a;font-family:'Liberation Sans',sans-serif;letter-spacing:0.386px;">Virtual</div>
<div class="a" style="left:450px;top:498px;width:10px;height:10px;border:1px solid #8c8f94;border-radius:2px;background:#fff"></div>
<div class="tx" id="t68" style="left:464.90px;top:501.00px;font-size:7.6px;font-weight:700;color:#3c434a;font-family:'Liberation Sans',sans-serif;letter-spacing:0.210px;">Downloadable</div>
<svg class="a" style="left:1088.5px;top:499px" width="10" height="8"><path d="M1 6.5 L5 2 L9 6.5" stroke="#50575e" stroke-width="1.3" fill="none"/></svg>
<svg class="a" style="left:1105.5px;top:499px" width="10" height="8"><path d="M1 1.5 L5 6 L9 1.5" stroke="#50575e" stroke-width="1.3" fill="none"/></svg>
<svg class="a" style="left:1125px;top:500px" width="6" height="5"><path d="M0 4.5 L3 0.5 L6 4.5 Z" fill="#50575e"/></svg>
<div class="a" style="left:121px;top:521px;width:196px;height:94px;background:#fafafa;border-right:1px solid #eee"></div>
<div class="a" style="left:121px;top:521px;width:196px;height:28px;background:#eee"></div>
<div class="a" style="left:121px;top:575px;width:196px;height:1px;background:#eee"></div>
<div class="a" style="left:121px;top:603px;width:196px;height:1px;background:#eee"></div>
<div class="tx" id="t69" style="left:141.30px;top:530.00px;font-size:9.2px;font-weight:400;color:#555;font-family:'Liberation Sans',sans-serif;letter-spacing:-0.284px;">General</div>
<div class="tx" id="t70" style="left:141.30px;top:557.00px;font-size:9.2px;font-weight:400;color:#2271b1;font-family:'Liberation Sans',sans-serif;letter-spacing:0.000px;">Inventory</div>
<div class="tx" id="t71" style="left:141.30px;top:585.00px;font-size:9.2px;font-weight:400;color:#2271b1;font-family:'Liberation Sans',sans-serif;letter-spacing:-0.196px;">Shipping</div>
<div class="tx" id="t72" style="left:141.30px;top:613.00px;font-size:9.2px;font-weight:400;color:#2271b1;font-family:'Liberation Sans',sans-serif;letter-spacing:-0.206px;">Linked Products</div>
<svg class="a" style="left:128px;top:529px" width="9" height="9" viewBox="0 0 20 20"><path d="M17 3 A5 5 0 0 0 11 8 L2 17 L4 19 L13 10 A5 5 0 0 0 18 4 L15 6 L14 5 Z" fill="#555"/></svg>
<svg class="a" style="left:128px;top:556px" width="9" height="9" viewBox="0 0 20 20"><path d="M10 1 L19 6 L12 19 L1 13 Z" fill="#2271b1"/><path d="M6 9 L13 12" stroke="#fff" stroke-width="1.5"/></svg>
<svg class="a" style="left:128px;top:584px" width="9" height="8" viewBox="0 0 20 16"><path d="M0 2 H12 V13 H0 Z M13 5 H17 L20 9 V13 H13 Z" fill="#2271b1"/><circle cx="4" cy="14" r="2" fill="#2271b1"/><circle cx="16" cy="14" r="2" fill="#2271b1"/></svg>
<svg class="a" style="left:128px;top:610px" width="9" height="9" viewBox="0 0 20 20"><path d="M8 12 L12 8 M5 10 L2 13 A3 3 0 0 0 7 18 L10 15 M10 5 L13 2 A3 3 0 0 1 18 7 L15 10" stroke="#2271b1" stroke-width="2.5" fill="none"/></svg>
<div class="a" style="left:318px;top:610px;width:819px;height:1px;background:#eee"></div>
<div class="tx" id="t73" style="left:331.60px;top:536.00px;font-size:7.6px;font-weight:400;color:#50575e;font-family:'Liberation Sans',sans-serif;letter-spacing:0.161px;">Regular price ($)</div>
<div class="a" style="left:432px;top:531px;width:346px;height:21px;background:#fff;border:1px solid #8c8f94;border-radius:3px"></div>
<div class="tx" id="t74" style="left:438.40px;top:537.00px;font-size:9.2px;font-weight:400;color:#2c3338;font-family:'Liberation Sans',sans-serif;letter-spacing:0.032px;">120.00</div>
<div class="tx" id="t75" style="left:331.60px;top:570.00px;font-size:7.6px;font-weight:400;color:#50575e;font-family:'Liberation Sans',sans-serif;letter-spacing:0.066px;">Sale price ($)</div>
<div class="a" style="left:432px;top:565px;width:346px;height:20px;background:#fff;border:1px solid #8c8f94;border-radius:3px"></div>
<div class="tx" id="t76" style="left:431.60px;top:589.00px;font-size:9.2px;font-weight:400;color:#2271b1;font-family:'Liberation Sans',sans-serif;letter-spacing:-0.314px;text-decoration:underline">Schedule</div>
<div class="red" style="left:317px;top:516px;width:480px;height:89px"></div>
<div class="a" style="left:1151px;top:94px;width:187px;height:220px;background:#fff;border:1px solid #c3c4c7"></div>
<div class="a" style="left:1152px;top:119px;width:185px;height:1px;background:#c3c4c7"></div>
<div class="tx" id="t77" style="left:1159.60px;top:102.00px;font-size:9.6px;font-weight:700;color:#1d2327;font-family:'Liberation Sans',sans-serif;letter-spacing:-0.194px;">Publish</div>
<svg class="a" style="left:1288.6px;top:103px" width="10" height="8"><path d="M1 6.5 L5 2 L9 6.5" stroke="#a7aaad" stroke-width="1.3" fill="none"/></svg>
<svg class="a" style="left:1306px;top:103px" width="10" height="8"><path d="M1 1.5 L5 6 L9 1.5" stroke="#50575e" stroke-width="1.3" fill="none"/></svg>
<svg class="a" style="left:1325px;top:104px" width="6" height="5"><path d="M0 4.5 L3 0.5 L6 4.5 Z" fill="#50575e"/></svg>
<div class="btn" style="left:1249px;top:126px;width:81px;height:21px"></div>
<div class="tx" id="t78" style="left:1256.20px;top:132.00px;font-size:9.2px;font-weight:400;color:#2271b1;font-family:'Liberation Sans',sans-serif;letter-spacing:-0.374px;">Preview Changes</div>
<svg class="a" style="left:1161px;top:154px" width="7" height="12" viewBox="0 0 7 12"><circle cx="3.5" cy="3" r="2.6" fill="#8c8f94"/><rect x="3" y="4" width="1.2" height="8" fill="#8c8f94"/></svg>
<div class="tx" id="t79" style="left:1174.80px;top:157.00px;font-size:9.2px;font-weight:400;color:#3c434a;font-family:'Liberation Sans',sans-serif;letter-spacing:-0.299px;">Status: <b>Published</b> <u style="color:#2271b1">Edit</u></div>
<svg class="a" style="left:1159px;top:179px" width="12" height="9" viewBox="0 0 20 14"><path d="M1 7 Q10 -3 19 7 Q10 17 1 7 Z" fill="#8c8f94"/><circle cx="10" cy="7" r="3" fill="#fff"/><circle cx="10" cy="7" r="1.5" fill="#8c8f94"/></svg>
<div class="tx" id="t80" style="left:1174.80px;top:180.00px;font-size:9.2px;font-weight:400;color:#3c434a;font-family:'Liberation Sans',sans-serif;letter-spacing:-0.174px;">Visibility: <b>Public</b> <u style="color:#2271b1">Edit</u></div>
<svg class="a" style="left:1159px;top:200px" width="11" height="11" viewBox="0 0 20 20"><rect x="1" y="3" width="18" height="16" fill="none" stroke="#8c8f94" stroke-width="1.6"/><rect x="1" y="3" width="18" height="4" fill="#8c8f94"/><path d="M5 1 V5 M15 1 V5 M6 9 V17 M10 9 V17 M14 9 V17" stroke="#8c8f94" stroke-width="1.5"/></svg>
<div class="tx" id="t81" style="left:1175.30px;top:202.00px;font-size:9.2px;font-weight:400;color:#3c434a;font-family:'Liberation Sans',sans-serif;letter-spacing:-0.314px;">Published on: <b>Nov 13, 2025 at 05:51</b></div>
<div class="tx" id="t82" style="left:1158.30px;top:216.00px;font-size:9.2px;font-weight:400;color:#2271b1;font-family:'Liberation Sans',sans-serif;letter-spacing:0.114px;text-decoration:underline">Edit</div>
<div class="tx" id="t83" style="left:1158.30px;top:236.00px;font-size:9.2px;font-weight:400;color:#3c434a;font-family:'Liberation Sans',sans-serif;letter-spacing:-0.323px;">Catalog visibility: <b>Shop and search results</b></div>
<div class="tx" id="t84" style="left:1158.30px;top:248.00px;font-size:9.2px;font-weight:400;color:#2271b1;font-family:'Liberation Sans',sans-serif;letter-spacing:0.114px;text-decoration:underline">Edit</div>
<div class="a" style="left:1152px;top:265px;width:185px;height:48px;background:#f6f7f7;border-top:1px solid #dcdcde"></div>
<div class="tx" id="t85" style="left:1158.30px;top:274.00px;font-size:9.2px;font-weight:400;color:#2271b1;font-family:'Liberation Sans',sans-serif;letter-spacing:-0.141px;text-decoration:underline">Copy to a new draft</div>
<div class="tx" id="t86" style="left:1158.30px;top:291.00px;font-size:9.2px;font-weight:400;color:#b32d2e;font-family:'Liberation Sans',sans-serif;letter-spacing:-0.217px;text-decoration:underline">Move to Trash</div>
<div class="a" style="left:1283px;top:285px;width:47px;height:22px;background:#2271b1;border-radius:3px"></div>
<div class="tx" id="t87" style="left:1292.20px;top:292.00px;font-size:9.2px;font-weight:400;color:#fff;font-family:'Liberation Sans',sans-serif;letter-spacing:-0.090px;">Update</div>
<div class="red" style="left:1271px;top:274px;width:67px;height:42px"></div>
<div class="a" style="left:1151px;top:327px;width:187px;height:268px;background:#fff;border:1px solid #c3c4c7"></div>
<div class="a" style="left:1152px;top:352px;width:185px;height:1px;background:#c3c4c7"></div>
<div class="tx" id="t88" style="left:1160.00px;top:336.00px;font-size:9.6px;font-weight:700;color:#1d2327;font-family:'Liberation Sans',sans-serif;letter-spacing:-0.219px;">Product image</div>
<svg class="a" style="left:1288.6px;top:336px" width="10" height="8"><path d="M1 6.5 L5 2 L9 6.5" stroke="#50575e" stroke-width="1.3" fill="none"/></svg>
<svg class="a" style="left:1306px;top:336px" width="10" height="8"><path d="M1 1.5 L5 6 L9 1.5" stroke="#50575e" stroke-width="1.3" fill="none"/></svg>
<svg class="a" style="left:1325px;top:337px" width="6" height="5"><path d="M0 4.5 L3 0.5 L6 4.5 Z" fill="#50575e"/></svg>
<svg class="a" style="left:1225px;top:358px" width="10" height="10" viewBox="0 0 20 20"><path d="M8 3 Q9 9 15 10 Q9 11 8 17 Q7 11 1 10 Q7 9 8 3 Z" fill="#c862d6"/><circle cx="16" cy="4" r="1.8" fill="#c862d6"/><circle cx="16" cy="16" r="1.8" fill="#c862d6"/></svg>
<div class="tx" id="t89" style="left:1238.60px;top:360.00px;font-size:9.2px;font-weight:400;color:#c862d6;font-family:'Liberation Sans',sans-serif;letter-spacing:-0.078px;">Unify with Elementor AI</div>
<div class="a" id="ringimg" style="left:1159px;top:382px;width:162px;height:139px;background-color:#fff;background-image:linear-gradient(45deg,#c9c9cb 25%,transparent 25%,transparent 75%,#c9c9cb 75%),linear-gradient(45deg,#c9c9cb 25%,transparent 25%,transparent 75%,#c9c9cb 75%);background-size:13px 13px;background-position:0 0,6.5px 6.5px"></div>
<svg class="a" style="left:1159px;top:382px" width="162" height="139" viewBox="0 0 162 139">
<defs>
<linearGradient id="ga" x1="0" y1="0" x2="1" y2="1"><stop offset="0" stop-color="#e6e6e6"/><stop offset="0.18" stop-color="#777"/><stop offset="0.32" stop-color="#ededed"/><stop offset="0.5" stop-color="#c4c4c4"/><stop offset="0.62" stop-color="#7c7c7c"/><stop offset="0.8" stop-color="#e4e4e4"/><stop offset="1" stop-color="#a0a0a0"/></linearGradient>
<linearGradient id="gb" x1="0" y1="0" x2="0.6" y2="1"><stop offset="0" stop-color="#d8d8d8"/><stop offset="0.35" stop-color="#a4a4a4"/><stop offset="0.55" stop-color="#e6e6e6"/><stop offset="0.8" stop-color="#cfcfcf"/><stop offset="1" stop-color="#8a8a8a"/></linearGradient>
<mask id="ma"><rect width="162" height="139" fill="#000"/><ellipse cx="88" cy="63" rx="79" ry="46" transform="rotate(38 88 63)" fill="#fff"/><ellipse cx="83.5" cy="68.5" rx="65" ry="29" transform="rotate(38 83.5 68.5)" fill="#000"/></mask>
<mask id="mb"><rect width="162" height="139" fill="#000"/><ellipse cx="78" cy="86" rx="77" ry="52" transform="rotate(10 78 86)" fill="#fff"/><ellipse cx="77.3" cy="90" rx="62" ry="33" transform="rotate(10 77.3 90)" fill="#000"/></mask>
<clipPath id="cbk"><path d="M0 0 H162 V128 L148 106 L100 98 L0 58 Z"/></clipPath>
<clipPath id="cfr"><path d="M0 58 L100 98 L148 106 L162 128 V139 H0 Z"/></clipPath>
</defs>
<g clip-path="url(#cbk)">
<rect width="162" height="139" fill="url(#gb)" mask="url(#mb)"/>
<ellipse cx="78" cy="86" rx="76" ry="51" fill="none" stroke="#555" stroke-width="1.2" transform="rotate(10 78 86)" opacity="0.7"/>
<ellipse cx="77.3" cy="90" rx="62.5" ry="33.5" fill="none" stroke="#4a4a4a" stroke-width="1.4" transform="rotate(10 77.3 90)" opacity="0.8"/>
<ellipse cx="77.5" cy="88" rx="70" ry="44" fill="none" stroke="#8a8a8a" stroke-width="2" transform="rotate(10 77.5 88)" opacity="0.7"/>
</g>
<rect width="162" height="139" fill="url(#ga)" mask="url(#ma)"/>
<ellipse cx="88" cy="63" rx="78.3" ry="45.3" fill="none" stroke="#444" stroke-width="1.2" transform="rotate(38 88 63)" opacity="0.7"/>
<ellipse cx="83.5" cy="68.5" rx="65.5" ry="29.5" fill="none" stroke="#3e3e3e" stroke-width="1.5" transform="rotate(38 83.5 68.5)" opacity="0.8"/>
<ellipse cx="86" cy="65.5" rx="72" ry="37" fill="none" stroke="#6e6e6e" stroke-width="2.2" transform="rotate(38 86 65.5)" opacity="0.6"/>
<ellipse cx="88" cy="63" rx="76" ry="43" fill="none" stroke="#fbfbfb" stroke-width="1.6" transform="rotate(38 88 63)" opacity="0.85"/>
<g clip-path="url(#cfr)">
<rect width="162" height="139" fill="url(#gb)" mask="url(#mb)"/>
<ellipse cx="78" cy="86" rx="76" ry="51" fill="none" stroke="#555" stroke-width="1.2" transform="rotate(10 78 86)" opacity="0.7"/>
<ellipse cx="77.3" cy="90" rx="62.5" ry="33.5" fill="none" stroke="#4a4a4a" stroke-width="1.4" transform="rotate(10 77.3 90)" opacity="0.8"/>
<ellipse cx="77.5" cy="88" rx="70" ry="43" fill="none" stroke="#f2f2f2" stroke-width="3" transform="rotate(10 77.5 88)" opacity="0.9"/>
</g>
</svg>
<div class="a" style="left:1166px;top:524px;width:8px;height:8px;border-radius:50%;background:#646970"></div>
<div class="tx" id="t90" style="left:1167.90px;top:526.00px;font-size:6.5px;font-weight:700;color:#fff;font-family:'Liberation Sans',sans-serif;letter-spacing:0.000px;">?</div>
<div class="tx" id="t91" style="left:1158.40px;top:550.00px;font-size:9.2px;font-weight:400;color:#646970;font-family:'Liberation Sans',sans-serif;letter-spacing:-0.150px;">Click the image to edit or update</div>
<div class="tx" id="t92" style="left:1158.40px;top:576.00px;font-size:9.2px;font-weight:400;color:#b32d2e;font-family:'Liberation Sans',sans-serif;letter-spacing:-0.214px;text-decoration:underline">Remove product image</div>
<div class="red" style="left:1150px;top:326px;width:193px;height:277px"></div>
<div class="a" style="left:1151px;top:608px;width:187px;height:20px;background:#fff;border:1px solid #c3c4c7"></div>
</body></html>
